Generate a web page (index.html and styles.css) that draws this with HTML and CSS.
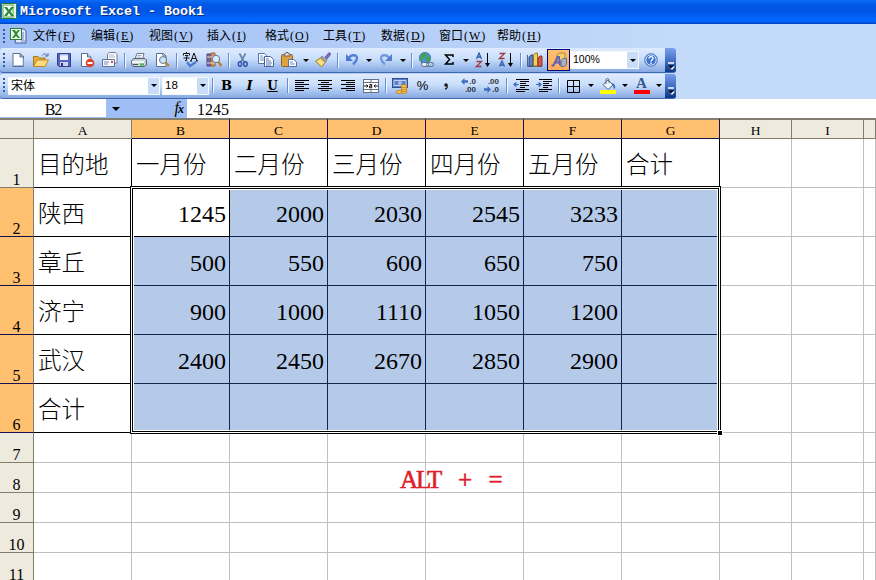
FILE: index.html
```html
<!DOCTYPE html>
<html lang="zh-CN">
<head>
  <meta charset="UTF-8">
  <title>Microsoft Excel - Book1</title>
  <link rel="stylesheet" href="styles.css">
</head>
<body>
  <div class="titlebar">
    <svg class="logo" width="16" height="16" viewBox="0 0 16 16"><rect x=".5" y=".5" width="15" height="15" rx="1" fill="#e9f3e4" stroke="#2c7a35"/><rect x="2" y="2" width="10" height="12" fill="#fff" stroke="#51a352"/><path d="M3 4h3l2 3 2-3h3L9.500 8.500 13 13h-3L8 10l-2 3H3l3.500-4.500z" fill="#268b35"/></svg>
    <span>Microsoft Excel - Book1</span>
  </div>

  <div class="menubar">
    <i class="grip"></i>
    <svg class="book" width="17" height="16" viewBox="0 0 17 16"><path d="M7 1h7l2 2v12H5z" fill="#dfe9fa" stroke="#425e99"/><path d="M13 4v8M11 13h4" stroke="#7189bc"/><rect x=".5" y=".5" width="11" height="11" fill="#edf7e9" stroke="#2c7a35"/><path d="M2 2h3l1 2 2-2h2L7 6l3 4H8L6 8l-2 2H2l3-4z" fill="#268b35"/></svg>
    <span>文件<em>(<u>F</u>)</em></span>
    <span>编辑<em>(<u>E</u>)</em></span>
    <span>视图<em>(<u>V</u>)</em></span>
    <span>插入<em>(<u>I</u>)</em></span>
    <span>格式<em>(<u>O</u>)</em></span>
    <span>工具<em>(<u>T</u>)</em></span>
    <span>数据<em>(<u>D</u>)</em></span>
    <span>窗口<em>(<u>W</u>)</em></span>
    <span>帮助<em>(<u>H</u>)</em></span>
  </div>

  <div class="toolbars">
    <div class="toolbar">
      <i class="grip"></i>
      <b class="btn"><svg viewBox="0 0 16 16"><path d="M3 1.500h7l3.500 3.500v9.500H3z" fill="#fff" stroke="#5c6d8f"/><path d="M10 1.500V5h3.500z" fill="#b9c9e3" stroke="#5c6d8f"/><path d="M4 13.500h9V7" fill="none" stroke="#a9bcde"/></svg></b>
      <b class="btn"><svg viewBox="0 0 16 16"><path d="M.5 14V4.500H5L6.500 6H12v8z" fill="#e8ae3c" stroke="#a97518"/><path d="M.5 14.500L4 8h11.500L12 14.500z" fill="#ffdc79" stroke="#b9862b"/><path d="M9 3.500c2-2.500 4-2 5 0M15 1v3h-3" fill="none" stroke="#4668a8"/></svg></b>
      <b class="btn"><svg viewBox="0 0 16 16"><path d="M1.500 1.500h13v13H3L1.500 13z" fill="#5364c6" stroke="#343e91"/><path d="M4 2h8v6H4z" fill="#eef3ff"/><path d="M4 2h8v1.500H4z" fill="#aebbe8"/><path d="M4 10h8v4H4z" fill="#ccd3ea"/><path d="M5 11h2v3H5z" fill="#26307b"/></svg></b>
      <b class="btn"><svg viewBox="0 0 16 16"><path d="M2.500 1.500h6l3.500 3.500v9.500H2.500z" fill="#fff" stroke="#5c6d8f"/><path d="M8.500 1.500V5H12" fill="#c6d3e8" stroke="#5c6d8f"/><circle cx="11" cy="11" r="4.300" fill="#d9432f"/><path d="M8.500 11h5" stroke="#fff" stroke-width="2"/></svg></b>
      <b class="btn"><svg viewBox="0 0 16 16"><path d="M5.500 6V2l2-1.500h6l1.500 2V11H5.500z" fill="#fff" stroke="#6d7fa3"/><path d="M7 3h5M7 5h6" stroke="#a8b5cd"/><path d="M.5 7.500h12v7H.500z" fill="#f6f9ff" stroke="#61718f"/><path d="M2 10h5M2 12h4" stroke="#7d8eaf"/><path d="M9 9h2v2H9z" fill="#d34f43"/></svg></b>
      <i class="sep"></i>
      <b class="btn"><svg viewBox="0 0 16 16"><path d="M4 7l2-5.500h7L11.500 7z" fill="#fff" stroke="#687793"/><path d="M6.500 3.500h4M6 5.200h4" stroke="#9eabc3"/><path d="M.7 8.500L3 6.500h11l1.500 1.500v5L13 14.500H2L.700 13z" fill="#c9d2d8" stroke="#56636f"/><path d="M1 9h12v2H1z" fill="#f4f7fa"/><path d="M9 11.500h4v2H9z" fill="#43ba4f"/><path d="M2 12.500h5" stroke="#44505c"/></svg></b>
      <b class="btn"><svg viewBox="0 0 16 16"><path d="M2.500 1.500h7L12 4v10.500H2.500z" fill="#fff" stroke="#5c6d8f"/><path d="M9 1.500V4h3" fill="none" stroke="#5c6d8f"/><circle cx="9" cy="8" r="3.500" fill="#cfe6f7" stroke="#68788f"/><path d="M11.500 10.500l3.500 3.500" stroke="#b98235" stroke-width="2.200"/></svg></b>
      <i class="sep"></i>
      <b class="btn"><svg viewBox="0 0 16 16"><path d="M3.500 0v1.500M.5 3.500V1.500h6v2M2 3.500h3L3.500 5v3.500H2M.500 6h6" fill="none" stroke="#111"/><path d="M8 9l3-8 3 8M9 6.500h4M7 9h2M13 9h2" fill="none" stroke="#111"/><path d="M4 10l3 4 6-4" fill="none" stroke="#4f78d0" stroke-width="2.300"/></svg></b>
      <b class="btn"><svg viewBox="0 0 16 16"><path d="M1 2h4v12H1z" fill="#7462a8" stroke="#514684"/><path d="M5 1h4v13H5z" fill="#d69a5a" stroke="#9a6232"/><path d="M1 5h8M1 11h8" stroke="#e8daba"/><circle cx="10" cy="7" r="3.700" fill="#d5edf9" stroke="#637899"/><path d="M12.500 10l3 4" stroke="#ba812b" stroke-width="2.300"/></svg></b>
      <i class="sep"></i>
      <b class="btn"><svg viewBox="0 0 16 16"><path d="M4.500 1.500l5 9M10.500 1.500l-5 9" stroke="#6682a8" stroke-width="1.600"/><g fill="none" stroke="#3458af" stroke-width="1.600"><ellipse cx="5" cy="12" rx="1.700" ry="2.300"/><ellipse cx="10.500" cy="12" rx="1.700" ry="2.300"/></g></svg></b>
      <b class="btn"><svg viewBox="0 0 16 16"><path d="M.5 1.500h6l2 2v8h-8z" fill="#fff" stroke="#5371ad"/><path d="M2 4h3M2 6h5M2 8h5" stroke="#7792c6"/><path d="M6.500 4.500h6l3 3v7h-9z" fill="#fff" stroke="#4262a1"/><path d="M8 7h3M8 9h5M8 11h6M8 13h5" stroke="#5879b6"/></svg></b>
      <b class="btn"><svg viewBox="0 0 16 16"><rect x=".5" y="2.500" width="11" height="12" rx="1" fill="#dda343" stroke="#946422"/><path d="M3 4V2h1.500L5 .5h2L7.500 2H9v2z" fill="#e9e5dc" stroke="#68635b"/><path d="M7.500 7.500h5l3 2.500v4.500h-8z" fill="#fff" stroke="#5470a0"/><path d="M9 10h3M9 12h5" stroke="#7792c6"/></svg></b>
      <b class="drop"></b>
      <b class="btn"><svg viewBox="0 0 16 16"><path d="M14 .500l2 1.500-4 5-2-2z" fill="#7d68bd" stroke="#514684" stroke-width=".6"/><path d="M7 4l5 4-1.500 2-5-4z" fill="#9daaba" stroke="#657080" stroke-width=".7"/><path d="M5.500 6l5 4-4 5L.500 9z" fill="#f6d46e" stroke="#a47f2b"/><path d="M3 9l5 3" stroke="#fff4be"/></svg></b>
      <i class="sep"></i>
      <b class="btn"><svg viewBox="0 0 16 16"><path d="M5 6c2-4 8.500-3.500 8 .5-.3 2.500-2 4-4 6" fill="none" stroke="#5380d5" stroke-width="2.300"/><path d="M2 2v7h7z" fill="#4c77ce"/></svg></b>
      <b class="drop"></b>
      <b class="btn"><svg viewBox="0 0 16 16"><path d="M11 6c-2-4-8.500-3.500-8 .5.3 2.500 2 4 4 6" fill="none" stroke="#7099df" stroke-width="2.300"/><path d="M14 2v7H7z" fill="#537ccc"/></svg></b>
      <b class="drop"></b>
      <i class="sep"></i>
      <b class="btn"><svg viewBox="0 0 16 16"><circle cx="7" cy="6" r="5.700" fill="#4d91d6" stroke="#386e9e" stroke-width=".7"/><path d="M3 3l3-2 3 1-1 3-3 1-1 4-2-3zM8 6l4-2v4l-3 3z" fill="#42a644"/><g fill="#e6edf5" stroke="#5b6e86"><rect x="3.500" y="10.500" width="7" height="4" rx="2"/><rect x="8.500" y="10.500" width="7" height="4" rx="2" fill="none"/></g></svg></b>
      <b class="btn"><svg viewBox="0 0 16 16"><path d="M12 5V3H4.500l4 4.500-4 4.500H12v-2" fill="none" stroke="#000" stroke-width="1.500"/></svg></b>
      <b class="drop"></b>
      <b class="btn"><svg viewBox="0 0 16 16"><path d="M1.500 7L4 1l2.500 6M2.500 5h3" fill="none" stroke="#315dad" stroke-width="1.300"/><path d="M1.500 9.500h5l-5 5h5" fill="none" stroke="#a13d48" stroke-width="1.300"/><path d="M12.500 1v13" stroke="#000"/><path d="M10 11h5l-2.500 4z"/></svg></b>
      <b class="btn"><svg viewBox="0 0 16 16"><path d="M1.500 1.500h5l-5 5h5" fill="none" stroke="#a13d48" stroke-width="1.300"/><path d="M1.500 14.500L4 9l2.500 5.500M2.500 13h3" fill="none" stroke="#315dad" stroke-width="1.300"/><path d="M12.500 1v13" stroke="#000"/><path d="M10 11h5l-2.500 4z"/></svg></b>
      <i class="sep"></i>
      <b class="btn"><svg viewBox="0 0 16 16"><path d="M.5 3v11.500H15" fill="none" stroke="#5b6572"/><path d="M2 5l2-2h2v11H2z" fill="#5b7fcb" stroke="#344f8f"/><path d="M6.500 3l2-2h2v13h-4z" fill="#f3cf54" stroke="#9a7627"/><path d="M11 6l2-2h2v10h-4z" fill="#d65946" stroke="#8f3328"/></svg></b>
      <b class="btn on"><svg viewBox="0 0 16 16"><path d="M6 3l2-2h6v6l-2 2H6z" fill="#f3cf67" stroke="#a88945"/><path d="M10 8.500l2-2h3.500v6l-2 2H10z" fill="#a5b2c5" stroke="#64738c"/><path d="M.5 13.500h2L6.500 5H8l1 8.500M3.500 10.500H9" fill="none" stroke="#6060b4" stroke-width="1.900"/></svg></b>
      <div class="combo zoom"><span>100%</span><b class="drop"></b></div>
      <b class="btn"><svg viewBox="0 0 16 16"><circle cx="8" cy="8" r="6.500" fill="#3d73d0" stroke="#7295c8"/><circle cx="8" cy="8" r="5.200" fill="none" stroke="#dbe9ff"/><path d="M6 6.500C6 4 10 4 10 6.500 10 8 8 8 8 9.500M8 10.500V12" fill="none" stroke="#fff" stroke-width="1.400"/></svg></b>
      <div class="cap"><svg viewBox="0 0 8 8"><path d="M1 1h6" stroke="#fff" stroke-width="1.300"/><path d="M2 4.500h6L5 8z" fill="#fff"/><path d="M1 3.500h6L4 6.500z" fill="#000"/></svg></div>
    </div>

    <div class="toolbar">
      <i class="grip"></i>
      <div class="combo font"><span>宋体</span><b class="drop"></b></div>
      <div class="combo size"><span>18</span><b class="drop"></b></div>
      <i class="sep"></i>
      <b class="btn letter">B</b>
      <b class="btn letter italic">I</b>
      <b class="btn letter under">U</b>
      <i class="sep"></i>
      <b class="btn"><svg viewBox="0 0 16 16"><path d="M1 2.500h14M1 4.500h9M1 6.500h14M1 8.500h9M1 10.500h14M1 12.500h9" stroke="#000"/></svg></b>
      <b class="btn"><svg viewBox="0 0 16 16"><path d="M1 2.500h14M4 4.500h8M1 6.500h14M4 8.500h8M1 10.500h14M4 12.500h8" stroke="#000"/></svg></b>
      <b class="btn"><svg viewBox="0 0 16 16"><path d="M1 2.500h14M6 4.500h9M1 6.500h14M6 8.500h9M1 10.500h14M6 12.500h9" stroke="#000"/></svg></b>
      <b class="btn"><svg viewBox="0 0 16 16"><rect x=".5" y="1.500" width="15" height="13" fill="#fff" stroke="#637087"/><path d="M.5 4.500h15M.5 11.500h15M8 1.500v3M8 11.500v3" stroke="#637087"/><path d="M1 8h4M11 8h4M3.500 6.500L5 8 3.500 9.500M12.500 6.500L11 8l1.500 1.500" fill="none" stroke="#111"/><path d="M6.500 6.500h2.200v3.300H6.500V8h2" fill="none" stroke="#111"/></svg></b>
      <i class="sep"></i>
      <b class="btn"><svg viewBox="0 0 16 16"><rect x=".5" y=".5" width="15" height="9" fill="#5b7fcb" stroke="#344f8f"/><path d="M2 2.500h12v5H2z" fill="none" stroke="#bfd1f5"/><circle cx="8" cy="5" r="2" fill="#a6bde9"/><g fill="#ffc64d" stroke="#a97518" stroke-width=".7"><ellipse cx="12" cy="14" rx="3" ry="1.500"/><ellipse cx="12" cy="12" rx="3" ry="1.500"/><ellipse cx="12" cy="10" rx="3" ry="1.500"/><ellipse cx="12" cy="8" rx="3" ry="1.500"/><ellipse cx="7" cy="14" rx="3" ry="1.500"/></g></svg></b>
      <b class="btn percent">%</b>
      <b class="btn"><svg viewBox="0 0 16 16"><path d="M7 11c2 0 2.500-2 2-3.500" fill="none" stroke="#1c1c1c" stroke-width="1.300"/><circle cx="8" cy="7" r="1.800" fill="#1c1c1c"/></svg></b>
      <b class="btn decimal"><span><svg viewBox="0 0 6 6"><path d="M3 0v2h3v2H3v2L0 3z"/></svg>.0</span><span>.00</span></b>
      <b class="btn decimal"><span>.00</span><span><svg viewBox="0 0 6 6"><path d="M3 0v2H0v2h3v2l3-3z"/></svg>.0</span></b>
      <i class="sep"></i>
      <b class="btn"><svg viewBox="0 0 16 16"><path d="M3 1.500h13M7 3.500h9M7 5.500h6M7 7.500h9M7 9.500h5M3 11.500h13M3 13.500h9" stroke="#000"/><path d="M6 6.500H1M3 4.500l-2.500 2 2.500 2z" fill="#416fc0" stroke="#416fc0"/></svg></b>
      <b class="btn"><svg viewBox="0 0 16 16"><path d="M3 1.500h13M7 3.500h9M7 5.500h6M7 7.500h9M7 9.500h5M3 11.500h13M3 13.500h9" stroke="#000"/><path d="M0 6.500h4M3 4.500l2.500 2-2.500 2z" fill="#416fc0" stroke="#416fc0"/></svg></b>
      <i class="sep wide"></i>
      <b class="btn"><svg viewBox="0 0 16 16"><path d="M1.500 2.500h12v12h-12zM7.500 2.500v12M1.500 8.500h12" fill="none" stroke="#000"/></svg></b>
      <b class="drop"></b>
      <b class="btn"><svg viewBox="0 0 16 16"><path d="M3 6.500L8 2l5 5-5 4.500z" fill="#eef4fb" stroke="#526984"/><path d="M6 6V1.500Q7.500-.5 9 1.500V5" fill="none" stroke="#526984"/><path d="M12 5q4 1 3 6-2-1-2-4z" fill="#3565b3"/><path d="M0 12h16v4H0z" fill="#ff0"/></svg></b>
      <b class="drop"></b>
      <b class="btn fontcolor"><span>A</span></b>
      <b class="drop"></b>
      <div class="cap"><svg viewBox="0 0 8 8"><path d="M1 1h6" stroke="#fff" stroke-width="1.300"/><path d="M2 4.500h6L5 8z" fill="#fff"/><path d="M1 3.500h6L4 6.500z" fill="#000"/></svg></div>
    </div>
  </div>

  <div class="formulabar">
    <div class="namebox">B2</div>
    <div class="fx"><b class="drop"></b><i>f<small>x</small></i></div>
    <div class="formula">1245</div>
  </div>

  <div class="sheet" id="sheet">
    <div class="selection"></div>
    <div class="handle"></div>
    <div class="note">ALT + =</div>
  </div>

  <script>
    const cols = ["A", "B", "C", "D", "E", "F", "G", "H", "I", ""];
    const rows = [
      ["目的地", "一月份", "二月份", "三月份", "四月份", "五月份", "合计"],
      ["陕西", 1245, 2000, 2030, 2545, 3233],
      ["章丘", 500, 550, 600, 650, 750],
      ["济宁", 900, 1000, 1110, 1050, 1200],
      ["武汉", 2400, 2450, 2670, 2850, 2900],
      ["合计"], [], [], [], [], []
    ];
    const sheet = document.getElementById("sheet");

    function add(text, className, r, c) {
      const div = document.createElement("div");
      div.className = className;
      div.textContent = text;
      div.style.gridArea = r + " / " + c;
      sheet.appendChild(div);
    }

    add("", "head", 1, 1);
    cols.forEach((name, c) => {
      add(name, "head" + (c > 0 && c < 7 ? " picked" : ""), 1, c + 2);
    });

    rows.forEach((row, r) => {
      add(r + 1, "rowhead" + (r > 0 && r < 6 ? " picked" : ""), r + 2, 1);
      cols.forEach((name, c) => {
        const value = row[c] === undefined ? "" : row[c];
        let cls = "cell";
        if (r < 6 && c < 7) cls += " boxed";
        if (r > 0 && r < 6 && c > 0 && c < 7 && !(r === 1 && c === 1)) cls += " selected";
        if (typeof value === "number") cls += " number";
        add(value, cls, r + 2, c + 2);
      });
    });
  </script>
</body>
</html>
```
FILE: styles.css
```css
* { box-sizing: border-box; }
html, body {
  margin: 0;
  height: 100%;
  overflow: hidden;
}
body {
  width: 876px;
  height: 580px;
  background: #fff;
  color: #000;
  font-family: "Liberation Serif", "Noto Sans CJK SC", serif;
  font-size: 12px;
}

/* title and menu */
.titlebar {
  height: 24px;
  display: flex;
  align-items: center;
  padding: 0 0 3px 1px;
  gap: 3px;
  background: linear-gradient(#0a6cf5 0, #0058e6 20%, #0054e3 45%, #0066ff 80%, #0062f8 90%, #0040bd 100%);
  color: #fff;
  font: bold 13.33px "Liberation Mono", monospace;
  text-shadow: 1px 1px #0b2f86;
}
.titlebar span { white-space: pre; padding-top: 2px; }
.menubar {
  height: 24px;
  display: flex;
  align-items: center;
  padding-left: 3px;
  background: linear-gradient(90deg, #9ebef5, #c4daf9 78%);
}
.menubar span {
  width: 58px;
  padding-left: 8px;
  line-height: 20px;
  white-space: nowrap;
}
.menubar em {
  font: 12px "Liberation Serif", serif;
  letter-spacing: 1px;
  padding-left: 1px;
}
.book { margin: 0 -2px 0 4px; }
.grip {
  width: 3px;
  height: 15px;
  flex: none;
  background: repeating-linear-gradient(#3b5a9f 0 2px, transparent 2px 4px);
}
.menubar .grip, .toolbar .grip { width: 2px; margin-right: 1px; }

/* toolbars */
.toolbars {
  height: 51px;
  display: flex;
  flex-direction: column;
  gap: 2px;
  background: linear-gradient(90deg, #9ebef5, #c4daf9 78%);
}
.toolbar {
  width: 676px;
  height: 25px;
  flex: none;
  display: flex;
  align-items: center;
  padding-left: 3px;
  border-radius: 3px;
  border-bottom: 1px solid #3f69ad;
  background: linear-gradient(#dfebfe, #c9defb 45%, #86a9e3);
  overflow: hidden;
}
.toolbar:last-child {
  height: 25px;
  margin-top: -1px;
  padding-bottom: 1px;
}
.btn {
  width: 23px;
  height: 22px;
  flex: none;
  display: flex;
  align-items: center;
  justify-content: center;
}
.btn > svg { width: 16px; height: 16px; }
.btn.on {
  width: 23px;
  margin-left: 1px;
  border: 1px solid #000080;
  background: linear-gradient(#ffc073, #ffac59);
}
.sep {
  width: 6px;
  height: 15px;
  flex: none;
  background: linear-gradient(#6a8ccb, #6a8ccb) 3px 0 / 1px 100% no-repeat, linear-gradient(#f1f9ff, #f1f9ff) 4px 1px / 1px 100% no-repeat;
}
.sep.wide { width: 7px; }
.drop {
  width: 11px;
  height: 17px;
  flex: none;
  display: flex;
  align-items: center;
  justify-content: center;
}
.drop::before {
  content: "";
  border: 3px solid transparent;
  border-top-color: #000;
  border-bottom: 0;
}
.combo {
  height: 18px;
  flex: none;
  display: flex;
  align-items: center;
  justify-content: space-between;
  background: #fff;
  border: 1px solid #f4f8ff;
  font: 12px "Liberation Sans", "Noto Sans CJK SC", sans-serif;
}
.combo .drop { background: #c9ddf9; height: 16px; }
.combo span { padding: 0 0 2px 2px; }
.combo.font { width: 152px; margin: 0 2px; }
.combo.size { width: 47px; font-size: 11.5px; }
.combo.zoom {
  width: 69px;
  font-size: 10.5px;
}
.letter {
  font: bold 13px "DejaVu Serif", serif;
}
.letter.italic { font-style: italic; }
.letter.under { text-decoration: underline; font-size: 12px; }
.percent { font: 13px "Liberation Sans", sans-serif; }
.decimal {
  flex-direction: column;
  align-items: stretch;
  padding: 0 4px;
  font: bold 8px/8px "Liberation Sans", sans-serif;
  color: #30343b;
}
.decimal span {
  display: flex;
  justify-content: flex-end;
  align-items: center;
  gap: 1px;
}
.decimal svg { width: 7px; height: 7px; fill: #416fc0; }
.fontcolor span {
  width: 16px;
  height: 16px;
  border-bottom: 4px solid #f00;
  font: bold 15px/11px "Liberation Serif", serif;
  text-align: center;
  color: #34588f;
}
.cap {
  width: 11px;
  height: 25px;
  flex: none;
  margin-left: auto;
  display: flex;
  align-items: flex-end;
  justify-content: center;
  padding-bottom: 3px;
  background: linear-gradient(#78a0ec, #3f6bc0 55%, #083581);
}
.cap svg { width: 8px; height: 8px; }

/* name box and formula */
.formulabar {
  height: 19px;
  display: flex;
  background: #9ebef5;
  font-size: 16px;
  line-height: 21px;
}
.namebox {
  width: 106px;
  height: 18px;
  background: #fff;
  text-align: center;
  letter-spacing: -1px;
}
.fx {
  width: 81px;
  display: flex;
  justify-content: space-between;
  padding: 0 4px;
}
.fx .drop { height: 19px; }
.fx .drop::before { border-width: 4px 4px 0; }
.fx i { line-height: 17px; letter-spacing: -1px; }
.fx small { font-size: 12px; font-weight: bold; }
.formula {
  flex: 1;
  padding-left: 10px;
  background: #fff;
}

/* worksheet */
.sheet {
  height: 462px;
  display: grid;
  grid-template-columns: 34px repeat(7, 98px) 72px 72px 12px;
  grid-template-rows: 21px repeat(6, 49px) repeat(5, 30px);
  overflow: hidden;
}
.head, .rowhead {
  background: #eeeade;
  border-right: 1px solid #827d6e;
  border-bottom: 1px solid #827d6e;
  text-align: center;
}
.head {
  border-top: 2px solid #827d6e;
  font-size: 13.5px;
  line-height: 21px;
}
.rowhead {
  display: flex;
  align-items: flex-end;
  justify-content: center;
  font-size: 16px;
  line-height: 14px;
}
.picked {
  background: #ffc06f;
  border-bottom-color: #17104f;
}
.head.picked { border-right-color: #17104f; }
.cell {
  border-right: 1px solid #c0c0c0;
  border-bottom: 1px solid #c0c0c0;
  padding: 3px 3px 0 4px;
  font-size: 23.5px;
  font-weight: 300;
  line-height: 47px;
  white-space: nowrap;
  overflow: hidden;
}
.boxed { border-color: #000; }
.selected {
  background: #b5cae9;
  border-color: #10264f;
}
.number {
  padding-top: 2px;
  text-align: right;
  font-size: 24px;
  font-weight: 400;
  line-height: 49px;
}
.selection {
  grid-area: 3 / 3 / 8 / 9;
  z-index: 1;
  margin: -2px -1px -1px -2px;
  border: 1px solid #000;
  box-shadow: inset 0 0 0 1px #fff, inset 0 0 0 2px #000, inset 0 0 0 3px #fff;
}
.handle {
  grid-area: 7 / 8;
  z-index: 2;
  align-self: end;
  justify-self: end;
  width: 6px;
  height: 6px;
  margin: 0 -3px -3px 0;
  background: #000;
  border: 1px solid #fff;
}
.note {
  grid-area: 9 / 5 / 10 / 8;
  z-index: 1;
  margin-left: 72px;
  color: #dc222c;
  font-size: 25px;
  line-height: 34px;
  letter-spacing: -2px;
  word-spacing: 14px;
  -webkit-text-stroke: .6px #dc222c;
}
```
